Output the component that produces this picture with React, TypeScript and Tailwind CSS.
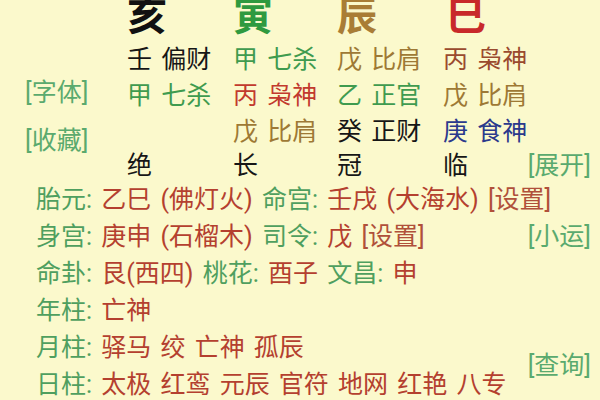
import React from "react";

type Cell = { s: string; w: string; c: string } | null;

const G = "text-[#3f9b4f]";
const OL = "text-[#9e7935]";
const BR = "text-[#9a4a2e]";
const RD = "text-[#c23a2e]";
const BK = "text-[#161616]";
const NV = "text-[#2b3a8c]";

const rows: Cell[][] = [
  [
    { s: "壬", w: "偏财", c: BK },
    { s: "甲", w: "七杀", c: G },
    { s: "戊", w: "比肩", c: OL },
    { s: "丙", w: "枭神", c: BR },
  ],
  [
    { s: "甲", w: "七杀", c: G },
    { s: "丙", w: "枭神", c: RD },
    { s: "乙", w: "正官", c: G },
    { s: "戊", w: "比肩", c: OL },
  ],
  [
    null,
    { s: "戊", w: "比肩", c: OL },
    { s: "癸", w: "正财", c: BK },
    { s: "庚", w: "食神", c: NV },
  ],
];

const K = ({ children }: { children: React.ReactNode }) => (
  <span className="text-[#4f9f5f]">{children}</span>
);
const V = ({ children }: { children: React.ReactNode }) => (
  <span className="text-[#b4402f]">{children}</span>
);
const L = ({ children }: { children: React.ReactNode }) => (
  <span className="text-[#5aaa6e]">{children}</span>
);
const S = ({ children }: { children: React.ReactNode }) => (
  <span className="text-[#b0503a]">{children}</span>
);

export default function App() {
  return (
    <div className="w-[600px] h-[400px] overflow-hidden bg-[#fbf9cc] font-[Roboto,'Noto_Sans_CJK_SC',sans-serif] text-[25px] [word-spacing:3px] whitespace-pre">
      {/* top section */}
      <div className="flex mt-[-6px]">
        <div className="w-[127px] shrink-0 flex flex-col pl-[25px] pt-[84px] gap-[18px]">
          <div className="h-[30px] leading-[30px]">
            <L>[字体]</L>
          </div>
          <div className="h-[30px] leading-[30px]">
            <L>[收藏]</L>
          </div>
        </div>
        <div className="flex-1 flex flex-col pr-[9px]">
          <div className="grid grid-cols-[106px_104px_106px_1fr] h-[40px] leading-[46px] text-[40px] font-bold">
            <span className="text-[#111111]">亥</span>
            <span className="text-[#2f9a3f]">寅</span>
            <span className="text-[#a97d36]">辰</span>
            <span className="text-[#c8292a] pl-[3px]">巳</span>
          </div>
          <div className="mt-[8px] flex flex-col">
            {rows.map((r, i) => (
              <div
                key={i}
                className="grid grid-cols-[106px_104px_106px_1fr] h-[36px] leading-[36px]"
              >
                {r.map((c, j) => (
                  <span key={j} className={c ? c.c : ""}>
                    {c ? `${c.s} ${c.w}` : ""}
                  </span>
                ))}
              </div>
            ))}
            <div className="grid grid-cols-[106px_104px_106px_1fr] h-[31px] leading-[31px] text-[#161616]">
              <span>绝</span>
              <span>长</span>
              <span>冠</span>
              <div className="flex justify-between">
                <span>临</span>
                <L>[展开]</L>
              </div>
            </div>
          </div>
        </div>
      </div>

      {/* lower section */}
      <div className="flex flex-col pl-[36px] pr-[9px]">
        <div className="h-[37px] leading-[37px]">
          <K>胎元:</K> <V>乙巳 (佛灯火)</V> <K>命宫:</K> <V>壬戌 (大海水)</V>{" "}
          <S>[设置]</S>
        </div>
        <div className="h-[37px] leading-[37px] flex justify-between">
          <span>
            <K>身宫:</K> <V>庚申 (石榴木)</V> <K>司令:</K> <V>戊</V>{" "}
            <S>[设置]</S>
          </span>
          <L>[小运]</L>
        </div>
        <div className="h-[37px] leading-[37px]">
          <K>命卦:</K> <V>艮(西四)</V> <K>桃花:</K> <V>酉子</V> <K>文昌:</K>{" "}
          <V>申</V>
        </div>
        <div className="h-[37px] leading-[37px]">
          <K>年柱:</K> <V>亡神</V>
        </div>
        <div className="flex items-center justify-between">
          <div className="flex flex-col">
            <div className="h-[37px] leading-[37px]">
              <K>月柱:</K> <V>驿马 绞 亡神 孤辰</V>
            </div>
            <div className="h-[37px] leading-[37px]">
              <K>日柱:</K> <V>太极 红鸾 元辰 官符 地网 红艳 八专</V>
            </div>
          </div>
          <L>[查询]</L>
        </div>
      </div>
    </div>
  );
}
